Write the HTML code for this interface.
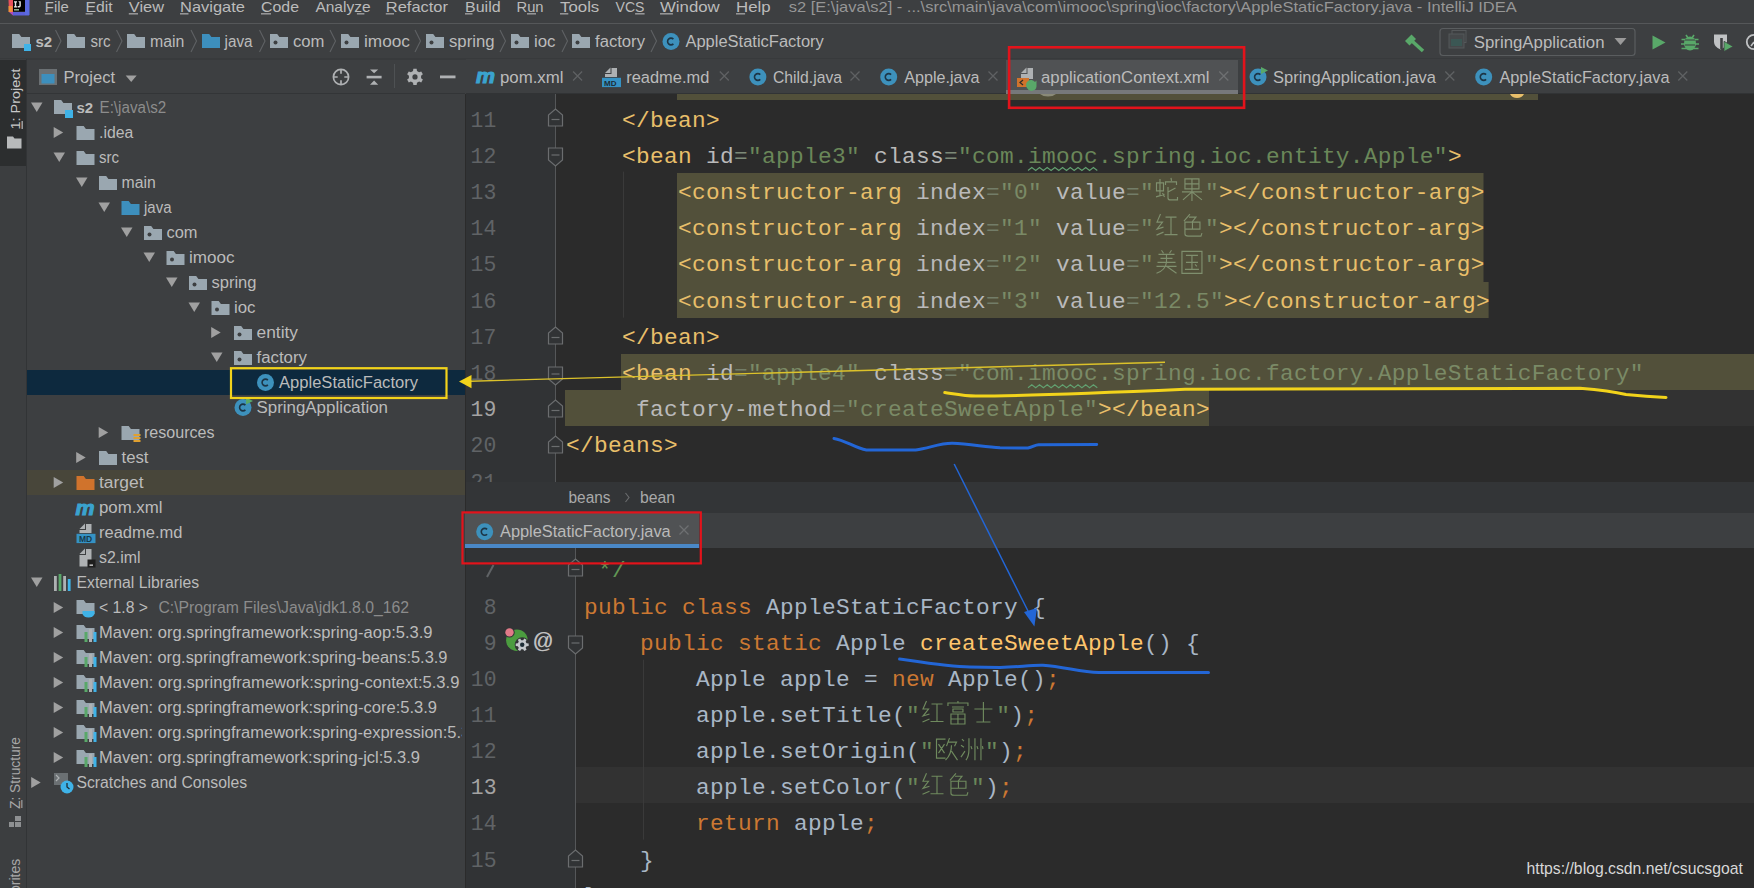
<!DOCTYPE html>
<html><head><meta charset="utf-8"><style>
html,body{margin:0;padding:0;background:#3d3f41;overflow:hidden;width:1754px;height:888px}
svg{display:block}
text{white-space:pre}
</style></head><body>
<svg width="1754" height="888" viewBox="0 0 1754 888">
<rect x="0" y="0" width="1754" height="888" fill="#3d3f41" />
<rect x="0" y="23" width="1754" height="1" fill="#555759" />
<rect x="0" y="58.5" width="1754" height="1" fill="#343638" />
<path d="M8.5 0h4.5v12h-4z" fill="#e8505b"/><path d="M8.5 6h4v6h-4z" fill="#f0903a"/>
<path d="M9 12h8l-4 3.5z" fill="#b04ab8"/><path d="M13 12h16v3.5h-16z" fill="#5b5fd8"/><path d="M25 0h4.5v15h-4.5z" fill="#5a6ae0"/>
<rect x="13" y="0" width="12" height="11.5" fill="#000" />
<path d="M14 1.2h3v1.2h-0.8v3.8h0.8v1.2h-3v-1.2h0.8v-3.8h-0.8zM18.2 1.2h2.6v4.6q0 1.6 -1.6 1.6h-1.6v-1.3h1.2q0.6 0 0.6 -0.6v-3z" fill="#e8e8e8"/>
<rect x="14" y="9" width="5" height="1.6" fill="#8fb08f" />
<text x="44.8" y="12" font-family="'Liberation Sans'" font-size="15" fill="#bbbbbb" textLength="24.0" lengthAdjust="spacingAndGlyphs" >File</text>
<rect x="44.8" y="13.3" width="7.5" height="1.1" fill="#bbbbbb" />
<text x="85.6" y="12" font-family="'Liberation Sans'" font-size="15" fill="#bbbbbb" textLength="27.1" lengthAdjust="spacingAndGlyphs" >Edit</text>
<rect x="85.6" y="13.3" width="7.1" height="1.1" fill="#bbbbbb" />
<text x="128.8" y="12" font-family="'Liberation Sans'" font-size="15" fill="#bbbbbb" textLength="35.2" lengthAdjust="spacingAndGlyphs" >View</text>
<rect x="128.8" y="13.3" width="9.2" height="1.1" fill="#bbbbbb" />
<text x="180" y="12" font-family="'Liberation Sans'" font-size="15" fill="#bbbbbb" textLength="65" lengthAdjust="spacingAndGlyphs" >Navigate</text>
<rect x="180.0" y="13.3" width="8.5" height="1.1" fill="#bbbbbb" />
<text x="261" y="12" font-family="'Liberation Sans'" font-size="15" fill="#bbbbbb" textLength="38" lengthAdjust="spacingAndGlyphs" >Code</text>
<rect x="261.0" y="13.3" width="10.0" height="1.1" fill="#bbbbbb" />
<text x="315.4" y="12" font-family="'Liberation Sans'" font-size="15" fill="#bbbbbb" textLength="55.2" lengthAdjust="spacingAndGlyphs" >Analyze</text>
<rect x="356.9" y="13.3" width="7.5" height="1.1" fill="#bbbbbb" />
<text x="385.8" y="12" font-family="'Liberation Sans'" font-size="15" fill="#bbbbbb" textLength="62.2" lengthAdjust="spacingAndGlyphs" >Refactor</text>
<rect x="385.8" y="13.3" width="8.2" height="1.1" fill="#bbbbbb" />
<text x="465" y="12" font-family="'Liberation Sans'" font-size="15" fill="#bbbbbb" textLength="35.6" lengthAdjust="spacingAndGlyphs" >Build</text>
<rect x="465.0" y="13.3" width="7.5" height="1.1" fill="#bbbbbb" />
<text x="516.5" y="12" font-family="'Liberation Sans'" font-size="15" fill="#bbbbbb" textLength="27.1" lengthAdjust="spacingAndGlyphs" >Run</text>
<rect x="527.0" y="13.3" width="9" height="1.1" fill="#bbbbbb" />
<text x="560" y="12" font-family="'Liberation Sans'" font-size="15" fill="#bbbbbb" textLength="39.3" lengthAdjust="spacingAndGlyphs" >Tools</text>
<rect x="560.0" y="13.3" width="8.3" height="1.1" fill="#bbbbbb" />
<text x="615.6" y="12" font-family="'Liberation Sans'" font-size="15" fill="#bbbbbb" textLength="28.9" lengthAdjust="spacingAndGlyphs" >VCS</text>
<rect x="635.1" y="13.3" width="9.5" height="1.1" fill="#bbbbbb" />
<text x="660" y="12" font-family="'Liberation Sans'" font-size="15" fill="#bbbbbb" textLength="59.7" lengthAdjust="spacingAndGlyphs" >Window</text>
<rect x="660.0" y="13.3" width="12.9" height="1.1" fill="#bbbbbb" />
<text x="736" y="12" font-family="'Liberation Sans'" font-size="15" fill="#bbbbbb" textLength="34.6" lengthAdjust="spacingAndGlyphs" >Help</text>
<rect x="736.0" y="13.3" width="9.1" height="1.1" fill="#bbbbbb" />
<text x="788.7" y="12" font-family="'Liberation Sans'" font-size="15" fill="#969696" textLength="728" lengthAdjust="spacingAndGlyphs" >s2 [E:\java\s2] - ...\src\main\java\com\imooc\spring\ioc\factory\AppleStaticFactory.java - IntelliJ IDEA</text>
<path d="M12 34h7.2l2.2 3.1H30V48H12Z" fill="#9aa7b0"/>
<rect x="24" y="44" width="7" height="7" fill="#3fb3e8" />
<text x="35.4" y="47" font-family="'Liberation Sans'" font-size="15" fill="#bbbbbb" font-weight="bold" >s2</text>
<path d="M55.5 30l5.5 11l-5.5 11" fill="none" stroke="#5f6264" stroke-width="1.1"/>
<path d="M67 34h7.2l2.2 3.1H85V48H67Z" fill="#9aa7b0"/>
<text x="90.5" y="47" font-family="'Liberation Sans'" font-size="16" fill="#bbbbbb" textLength="20.1" lengthAdjust="spacingAndGlyphs" >src</text>
<path d="M116.5 30l5.5 11l-5.5 11" fill="none" stroke="#5f6264" stroke-width="1.1"/>
<path d="M127 34h7.2l2.2 3.1H145V48H127Z" fill="#9aa7b0"/>
<text x="150" y="47" font-family="'Liberation Sans'" font-size="16" fill="#bbbbbb" textLength="34.4" lengthAdjust="spacingAndGlyphs" >main</text>
<path d="M191 30l5.5 11l-5.5 11" fill="none" stroke="#5f6264" stroke-width="1.1"/>
<path d="M202 34h7.2l2.2 3.1H220V48H202Z" fill="#3d8fbd"/>
<text x="224.6" y="47" font-family="'Liberation Sans'" font-size="16" fill="#bbbbbb" textLength="28" lengthAdjust="spacingAndGlyphs" >java</text>
<path d="M259.5 30l5.5 11l-5.5 11" fill="none" stroke="#5f6264" stroke-width="1.1"/>
<path d="M270 34h7.2l2.2 3.1H288V48H270Z" fill="#9aa7b0"/>
<circle cx="275.5" cy="42.5" r="2" fill="#3d3f41"/>
<text x="293" y="47" font-family="'Liberation Sans'" font-size="16" fill="#bbbbbb" textLength="31.5" lengthAdjust="spacingAndGlyphs" >com</text>
<path d="M330 30l5.5 11l-5.5 11" fill="none" stroke="#5f6264" stroke-width="1.1"/>
<path d="M341 34h7.2l2.2 3.1H359V48H341Z" fill="#9aa7b0"/>
<circle cx="346.5" cy="42.5" r="2" fill="#3d3f41"/>
<text x="364" y="47" font-family="'Liberation Sans'" font-size="16" fill="#bbbbbb" textLength="46" lengthAdjust="spacingAndGlyphs" >imooc</text>
<path d="M415 30l5.5 11l-5.5 11" fill="none" stroke="#5f6264" stroke-width="1.1"/>
<path d="M426 34h7.2l2.2 3.1H444V48H426Z" fill="#9aa7b0"/>
<circle cx="431.5" cy="42.5" r="2" fill="#3d3f41"/>
<text x="449" y="47" font-family="'Liberation Sans'" font-size="16" fill="#bbbbbb" textLength="45.5" lengthAdjust="spacingAndGlyphs" >spring</text>
<path d="M500 30l5.5 11l-5.5 11" fill="none" stroke="#5f6264" stroke-width="1.1"/>
<path d="M511 34h7.2l2.2 3.1H529V48H511Z" fill="#9aa7b0"/>
<circle cx="516.5" cy="42.5" r="2" fill="#3d3f41"/>
<text x="534" y="47" font-family="'Liberation Sans'" font-size="16" fill="#bbbbbb" textLength="21.5" lengthAdjust="spacingAndGlyphs" >ioc</text>
<path d="M562 30l5.5 11l-5.5 11" fill="none" stroke="#5f6264" stroke-width="1.1"/>
<path d="M572 34h7.2l2.2 3.1H590V48H572Z" fill="#9aa7b0"/>
<circle cx="577.5" cy="42.5" r="2" fill="#3d3f41"/>
<text x="595" y="47" font-family="'Liberation Sans'" font-size="16" fill="#bbbbbb" textLength="50" lengthAdjust="spacingAndGlyphs" >factory</text>
<path d="M651 30l5.5 11l-5.5 11" fill="none" stroke="#5f6264" stroke-width="1.1"/>
<circle cx="671" cy="41.5" r="8.5" fill="#3d91bc"/>
<path d="M673.4 39.1A3.4 3.4 0 1 0 673.4 43.9" fill="none" stroke="#1c3546" stroke-width="1.6"/>
<text x="685.4" y="47" font-family="'Liberation Sans'" font-size="16" fill="#bbbbbb" textLength="138.4" lengthAdjust="spacingAndGlyphs" >AppleStaticFactory</text>
<path d="M1405 41l6.5-6.5 4.5 4.5-6.5 6.5z" fill="#59a869"/><path d="M1412 41l11 10" stroke="#59a869" stroke-width="3.5" fill="none"/>
<rect x="1440" y="28.5" width="195" height="27" rx="3" fill="none" stroke="#5a5d5f" stroke-width="1.2"/>
<rect x="1452" y="30.5" width="14" height="12" fill="none" stroke="#55585a" stroke-width="1"/>
<rect x="1449" y="34" width="15" height="14" fill="#45484a" stroke="#55585a" stroke-width="1"/>
<rect x="1451" y="39" width="11" height="7" fill="#3b5754" />
<text x="1473.8" y="47.5" font-family="'Liberation Sans'" font-size="16" fill="#bbbbbb" textLength="130.7" lengthAdjust="spacingAndGlyphs" >SpringApplication</text>
<path d="M1614.5 38h12l-6 7z" fill="#9a9a9a"/>
<path d="M1652.5 35.5v14l13 -7z" fill="#59a869"/>
<ellipse cx="1690" cy="43.5" rx="6" ry="7" fill="#59a869"/><path d="M1681.5 39.5h17M1681 44h18M1681.5 48.5h17" stroke="#59a869" stroke-width="1.6"/><path d="M1686 35l2 3M1694 35l-2 3" stroke="#59a869" stroke-width="1.6"/><path d="M1685 40h10M1685 45h10" stroke="#3d3f41" stroke-width="1.2"/>
<path d="M1714 34.5H1727V42Q1727 47 1720.5 49.5Q1714 47 1714 42Z" fill="#c0c2c4"/><path d="M1721.5 38v11" stroke="#3d3f41" stroke-width="2.6"/><path d="M1724 41.3v10.3l9.2 -5.15z" fill="#59a869" stroke="#3d3f41" stroke-width="0.8"/>
<circle cx="1754" cy="42" r="7.2" fill="none" stroke="#c0c2c4" stroke-width="1.8"/><path d="M1754 42l-3 4" stroke="#c0c2c4" stroke-width="1.6"/>
<rect x="0" y="59" width="26" height="829" fill="#3c3e40" />
<rect x="0" y="60" width="26" height="106" fill="#2c2e2f" />
<rect x="26" y="59" width="1" height="829" fill="#323436" />
<text transform="translate(20.2 129.5) rotate(-90)" font-family="'Liberation Sans'" font-size="13.5" fill="#c8c8c8" textLength="61" lengthAdjust="spacingAndGlyphs">1: Project</text>
<rect x="21.6" y="121" width="1.1" height="8" fill="#c8c8c8" />
<path d="M7 136.5h6l1.5 2h7v10h-14.5z" fill="#b8babb"/>
<text transform="translate(20 809) rotate(-90)" font-family="'Liberation Sans'" font-size="14" fill="#a8a8a8" textLength="72" lengthAdjust="spacingAndGlyphs">Z: Structure</text>
<path d="M9 822h5v5h-5zM15 822h6v5h-6zM15 816h6v5h-6z" fill="#8e9092"/>
<rect x="21.3" y="800" width="1.1" height="8" fill="#a8a8a8" />
<text transform="translate(20 893) rotate(-90)" font-family="'Liberation Sans'" font-size="14" fill="#a8a8a8">orites</text>
<rect x="27" y="93" width="438" height="1" fill="#333537" />
<rect x="39" y="69" width="18" height="16" fill="#6b7073" />
<rect x="41.5" y="74" width="13" height="9.5" fill="#3d8fbd" />
<text x="63.5" y="82.7" font-family="'Liberation Sans'" font-size="16" fill="#bbbbbb" textLength="51.5" lengthAdjust="spacingAndGlyphs" >Project</text>
<path d="M125.7 75.5h11l-5.5 6.5z" fill="#a0a0a0"/>
<circle cx="341" cy="77" r="7.6" fill="none" stroke="#afb1b3" stroke-width="1.7"/><path d="M341 69.5v4.2M341 80.3v4.2M333.5 77h4.2M344.3 77h4.2" stroke="#afb1b3" stroke-width="1.7"/>
<path d="M366.6 77.1h15" stroke="#afb1b3" stroke-width="2.6"/><path d="M370 69.4h8.2l-4.1 3.9z M370 84.8h8.2l-4.1 -4.3z" fill="#afb1b3"/>
<rect x="394" y="64" width="1" height="24" fill="#4e5153" />
<path d="M413.35 68.77L416.65 68.77L416.97 71.02L419.10 72.25L421.22 71.40L422.87 74.26L421.08 75.67L421.08 78.13L422.87 79.54L421.22 82.40L419.10 81.55L416.97 82.78L416.65 85.03L413.35 85.03L413.03 82.78L410.90 81.55L408.78 82.40L407.13 79.54L408.92 78.13L408.92 75.67L407.13 74.26L408.78 71.40L410.90 72.25L413.03 71.02Z" fill="#afb1b3"/><circle cx="415" cy="76.9" r="2.6" fill="#3d3f41"/>
<rect x="440" y="75.5" width="15.5" height="2.8" fill="#afb1b3" />
<rect x="27" y="370" width="438" height="25" fill="#0d293e" />
<rect x="27" y="470" width="438" height="25" fill="#48463a" />
<path d="M31.0 102.5h11.5l-5.75 9.5z" fill="#a0a0a0"/>
<path d="M54.0 100h7.2l2.2 3.1H72.0V114H54.0Z" fill="#9aa7b0"/>
<rect x="65.0" y="110" width="8" height="8" fill="#3fb3e8" />
<text x="76.5" y="112.6" font-family="'Liberation Sans'" font-size="15" fill="#bbbbbb" font-weight="bold" >s2</text>
<text x="99.5" y="112.6" font-family="'Liberation Sans'" font-size="16" fill="#8c8c8c" textLength="66.7" lengthAdjust="spacingAndGlyphs" >E:\java\s2</text>
<path d="M53.7 127v11l9.5 -5.5z" fill="#a0a0a0"/>
<path d="M76.5 126h7.2l2.2 3.1H94.5V140H76.5Z" fill="#9aa7b0"/>
<text x="99.0" y="137.6" font-family="'Liberation Sans'" font-size="16" fill="#bbbbbb" textLength="34.2" lengthAdjust="spacingAndGlyphs" >.idea</text>
<path d="M53.5 152.5h11.5l-5.75 9.5z" fill="#a0a0a0"/>
<path d="M76.5 151h7.2l2.2 3.1H94.5V165H76.5Z" fill="#9aa7b0"/>
<text x="99.0" y="162.6" font-family="'Liberation Sans'" font-size="16" fill="#bbbbbb" textLength="20" lengthAdjust="spacingAndGlyphs" >src</text>
<path d="M76.0 177.5h11.5l-5.75 9.5z" fill="#a0a0a0"/>
<path d="M99.0 176h7.2l2.2 3.1H117.0V190H99.0Z" fill="#9aa7b0"/>
<text x="121.5" y="187.6" font-family="'Liberation Sans'" font-size="16" fill="#bbbbbb" textLength="34.2" lengthAdjust="spacingAndGlyphs" >main</text>
<path d="M98.5 202.5h11.5l-5.75 9.5z" fill="#a0a0a0"/>
<path d="M121.5 201h7.2l2.2 3.1H139.5V215H121.5Z" fill="#3d8fbd"/>
<text x="144.0" y="212.6" font-family="'Liberation Sans'" font-size="16" fill="#bbbbbb" textLength="27.5" lengthAdjust="spacingAndGlyphs" >java</text>
<path d="M121.0 227.5h11.5l-5.75 9.5z" fill="#a0a0a0"/>
<path d="M144.0 226h7.2l2.2 3.1H162.0V240H144.0Z" fill="#9aa7b0"/>
<circle cx="149.5" cy="234.5" r="2" fill="#3d3f41"/>
<text x="166.5" y="237.6" font-family="'Liberation Sans'" font-size="16" fill="#bbbbbb" textLength="31" lengthAdjust="spacingAndGlyphs" >com</text>
<path d="M143.5 252.5h11.5l-5.75 9.5z" fill="#a0a0a0"/>
<path d="M166.5 251h7.2l2.2 3.1H184.5V265H166.5Z" fill="#9aa7b0"/>
<circle cx="172.0" cy="259.5" r="2" fill="#3d3f41"/>
<text x="189.0" y="262.6" font-family="'Liberation Sans'" font-size="16" fill="#bbbbbb" textLength="45.5" lengthAdjust="spacingAndGlyphs" >imooc</text>
<path d="M166.0 277.5h11.5l-5.75 9.5z" fill="#a0a0a0"/>
<path d="M189.0 276h7.2l2.2 3.1H207.0V290H189.0Z" fill="#9aa7b0"/>
<circle cx="194.5" cy="284.5" r="2" fill="#3d3f41"/>
<text x="211.5" y="287.6" font-family="'Liberation Sans'" font-size="16" fill="#bbbbbb" textLength="45" lengthAdjust="spacingAndGlyphs" >spring</text>
<path d="M188.5 302.5h11.5l-5.75 9.5z" fill="#a0a0a0"/>
<path d="M211.5 301h7.2l2.2 3.1H229.5V315H211.5Z" fill="#9aa7b0"/>
<circle cx="217.0" cy="309.5" r="2" fill="#3d3f41"/>
<text x="234.0" y="312.6" font-family="'Liberation Sans'" font-size="16" fill="#bbbbbb" textLength="21.5" lengthAdjust="spacingAndGlyphs" >ioc</text>
<path d="M211.2 327v11l9.5 -5.5z" fill="#a0a0a0"/>
<path d="M234.0 326h7.2l2.2 3.1H252.0V340H234.0Z" fill="#9aa7b0"/>
<circle cx="239.5" cy="334.5" r="2" fill="#3d3f41"/>
<text x="256.5" y="337.6" font-family="'Liberation Sans'" font-size="16" fill="#bbbbbb" textLength="41.5" lengthAdjust="spacingAndGlyphs" >entity</text>
<path d="M211.0 352.5h11.5l-5.75 9.5z" fill="#a0a0a0"/>
<path d="M234.0 351h7.2l2.2 3.1H252.0V365H234.0Z" fill="#9aa7b0"/>
<circle cx="239.5" cy="359.5" r="2" fill="#3d3f41"/>
<text x="256.5" y="362.6" font-family="'Liberation Sans'" font-size="16" fill="#bbbbbb" textLength="50.5" lengthAdjust="spacingAndGlyphs" >factory</text>
<circle cx="265.5" cy="382.5" r="8.5" fill="#3d91bc"/>
<path d="M267.9 380.1A3.4 3.4 0 1 0 267.9 384.9" fill="none" stroke="#1c3546" stroke-width="1.6"/>
<text x="279.0" y="387.6" font-family="'Liberation Sans'" font-size="16" fill="#bbbbbb" textLength="139" lengthAdjust="spacingAndGlyphs" >AppleStaticFactory</text>
<circle cx="243.0" cy="407.5" r="8.5" fill="#3d91bc"/>
<path d="M245.4 405.1A3.4 3.4 0 1 0 245.4 409.9" fill="none" stroke="#1c3546" stroke-width="1.6"/>
<path d="M246.0 397.5l7 3.5l-7 3.5z" fill="#59a869"/>
<text x="256.5" y="412.6" font-family="'Liberation Sans'" font-size="16" fill="#bbbbbb" textLength="131.5" lengthAdjust="spacingAndGlyphs" >SpringApplication</text>
<path d="M98.7 427v11l9.5 -5.5z" fill="#a0a0a0"/>
<path d="M121.5 426h7.2l2.2 3.1H139.5V440H121.5Z" fill="#9aa7b0"/>
<path d="M133.5 435h7M133.5 438h7M133.5 441h7" stroke="#e0a030" stroke-width="1.8"/>
<text x="144.0" y="437.6" font-family="'Liberation Sans'" font-size="16" fill="#bbbbbb" textLength="70.5" lengthAdjust="spacingAndGlyphs" >resources</text>
<path d="M76.2 452v11l9.5 -5.5z" fill="#a0a0a0"/>
<path d="M99.0 451h7.2l2.2 3.1H117.0V465H99.0Z" fill="#9aa7b0"/>
<text x="121.5" y="462.6" font-family="'Liberation Sans'" font-size="16" fill="#bbbbbb" textLength="27" lengthAdjust="spacingAndGlyphs" >test</text>
<path d="M53.7 477v11l9.5 -5.5z" fill="#a0a0a0"/>
<path d="M76.5 476h7.2l2.2 3.1H94.5V490H76.5Z" fill="#d0732c"/>
<text x="99.0" y="487.6" font-family="'Liberation Sans'" font-size="16" fill="#bbbbbb" textLength="44.5" lengthAdjust="spacingAndGlyphs" >target</text>
<text x="75.5" y="514.5" font-family="'Liberation Sans'" font-size="21" font-style="italic" font-weight="bold" fill="#3aa3cf" stroke="#3aa3cf" stroke-width="1.1" textLength="19" lengthAdjust="spacingAndGlyphs">m</text>
<text x="99.0" y="512.6" font-family="'Liberation Sans'" font-size="16" fill="#bbbbbb" textLength="63.5" lengthAdjust="spacingAndGlyphs" >pom.xml</text>
<path d="M86.0 524H91.5V533H79.5V530H86.0Z" fill="#aeb1b3"/><path d="M79.5 529L85.0 523.5V529Z" fill="#aeb1b3"/>
<rect x="76.5" y="533.8" width="19" height="9.3" fill="#3592c4" />
<text x="79.0" y="542" font-family="'Liberation Sans'" font-size="8.5" fill="#173a4c" font-weight="bold">MD</text>
<text x="99.0" y="537.6" font-family="'Liberation Sans'" font-size="16" fill="#bbbbbb" textLength="83.5" lengthAdjust="spacingAndGlyphs" >readme.md</text>
<path d="M86.0 549H91.5V566.5H79.5V555H86.0Z" fill="#aeb1b3"/><path d="M79.5 554L85.0 548.5V554Z" fill="#aeb1b3"/>
<rect x="87.5" y="559.5" width="8" height="8" fill="#1e1e1e" />
<rect x="89.5" y="564.5" width="3.5" height="1.3" fill="#ddd" />
<text x="99.0" y="562.6" font-family="'Liberation Sans'" font-size="16" fill="#bbbbbb" textLength="41.5" lengthAdjust="spacingAndGlyphs" >s2.iml</text>
<path d="M31.0 577.5h11.5l-5.75 9.5z" fill="#a0a0a0"/>
<rect x="54.0" y="576" width="2.8" height="15" fill="#aeb1b3" />
<rect x="58.6" y="574" width="2.8" height="17" fill="#59a869" />
<rect x="63.2" y="576" width="2.8" height="15" fill="#aeb1b3" />
<rect x="67.8" y="579" width="2.8" height="12" fill="#3fb3e8" />
<text x="76.5" y="587.6" font-family="'Liberation Sans'" font-size="16" fill="#bbbbbb" textLength="122.6" lengthAdjust="spacingAndGlyphs" >External Libraries</text>
<path d="M53.7 602v11l9.5 -5.5z" fill="#a0a0a0"/>
<path d="M76.5 600h7.2l2.2 3.1H94.5V614H76.5Z" fill="#9aa7b0"/>
<path d="M82.5 611h12v2.5a6 4 0 0 1 -12 0z" fill="#3fb3e8"/>
<text x="99.0" y="612.6" font-family="'Liberation Sans'" font-size="16" fill="#bbbbbb" textLength="49" lengthAdjust="spacingAndGlyphs" >&lt; 1.8 &gt;</text>
<text x="158.4" y="612.6" font-family="'Liberation Sans'" font-size="16" fill="#8c8c8c" textLength="250.6" lengthAdjust="spacingAndGlyphs" >C:\Program Files\Java\jdk1.8.0_162</text>
<path d="M53.7 627v11l9.5 -5.5z" fill="#a0a0a0"/>
<path d="M76.5 625h7.2l2.2 3.1H94.5V639H76.5Z" fill="#9aa7b0"/>
<rect x="84.5" y="632" width="3" height="10" fill="#59a869" />
<rect x="89.0" y="629" width="3" height="13" fill="#aeb1b3" />
<rect x="93.5" y="632" width="3" height="10" fill="#3fb3e8" />
<text x="99.0" y="637.6" font-family="'Liberation Sans'" font-size="16" fill="#bbbbbb" textLength="333.5" lengthAdjust="spacingAndGlyphs" >Maven: org.springframework:spring-aop:5.3.9</text>
<path d="M53.7 652v11l9.5 -5.5z" fill="#a0a0a0"/>
<path d="M76.5 650h7.2l2.2 3.1H94.5V664H76.5Z" fill="#9aa7b0"/>
<rect x="84.5" y="657" width="3" height="10" fill="#59a869" />
<rect x="89.0" y="654" width="3" height="13" fill="#aeb1b3" />
<rect x="93.5" y="657" width="3" height="10" fill="#3fb3e8" />
<text x="99.0" y="662.6" font-family="'Liberation Sans'" font-size="16" fill="#bbbbbb" textLength="348.5" lengthAdjust="spacingAndGlyphs" >Maven: org.springframework:spring-beans:5.3.9</text>
<path d="M53.7 677v11l9.5 -5.5z" fill="#a0a0a0"/>
<path d="M76.5 675h7.2l2.2 3.1H94.5V689H76.5Z" fill="#9aa7b0"/>
<rect x="84.5" y="682" width="3" height="10" fill="#59a869" />
<rect x="89.0" y="679" width="3" height="13" fill="#aeb1b3" />
<rect x="93.5" y="682" width="3" height="10" fill="#3fb3e8" />
<text x="99.0" y="687.6" font-family="'Liberation Sans'" font-size="16" fill="#bbbbbb" textLength="360.4" lengthAdjust="spacingAndGlyphs" >Maven: org.springframework:spring-context:5.3.9</text>
<path d="M53.7 702v11l9.5 -5.5z" fill="#a0a0a0"/>
<path d="M76.5 700h7.2l2.2 3.1H94.5V714H76.5Z" fill="#9aa7b0"/>
<rect x="84.5" y="707" width="3" height="10" fill="#59a869" />
<rect x="89.0" y="704" width="3" height="13" fill="#aeb1b3" />
<rect x="93.5" y="707" width="3" height="10" fill="#3fb3e8" />
<text x="99.0" y="712.6" font-family="'Liberation Sans'" font-size="16" fill="#bbbbbb" textLength="338" lengthAdjust="spacingAndGlyphs" >Maven: org.springframework:spring-core:5.3.9</text>
<path d="M53.7 727v11l9.5 -5.5z" fill="#a0a0a0"/>
<path d="M76.5 725h7.2l2.2 3.1H94.5V739H76.5Z" fill="#9aa7b0"/>
<rect x="84.5" y="732" width="3" height="10" fill="#59a869" />
<rect x="89.0" y="729" width="3" height="13" fill="#aeb1b3" />
<rect x="93.5" y="732" width="3" height="10" fill="#3fb3e8" />
<text x="99.0" y="737.6" font-family="'Liberation Sans'" font-size="16" fill="#bbbbbb" textLength="385" lengthAdjust="spacingAndGlyphs"  clip-path="url(#treeclip)">Maven: org.springframework:spring-expression:5.3.9</text>
<path d="M53.7 752v11l9.5 -5.5z" fill="#a0a0a0"/>
<path d="M76.5 750h7.2l2.2 3.1H94.5V764H76.5Z" fill="#9aa7b0"/>
<rect x="84.5" y="757" width="3" height="10" fill="#59a869" />
<rect x="89.0" y="754" width="3" height="13" fill="#aeb1b3" />
<rect x="93.5" y="757" width="3" height="10" fill="#3fb3e8" />
<text x="99.0" y="762.6" font-family="'Liberation Sans'" font-size="16" fill="#bbbbbb" textLength="321" lengthAdjust="spacingAndGlyphs" >Maven: org.springframework:spring-jcl:5.3.9</text>
<path d="M31.2 777v11l9.5 -5.5z" fill="#a0a0a0"/>
<path d="M54.0 773h14v12h-14z" fill="#6b7073"/><path d="M56.0 775l3 3l-3 3" stroke="#aeb1b3" fill="none" stroke-width="1.2"/>
<circle cx="67.0" cy="787" r="6.5" fill="#3fb3e8"/><path d="M67.0 783v4l2.5 2" stroke="#1d2d36" fill="none" stroke-width="1.3"/>
<text x="76.5" y="787.6" font-family="'Liberation Sans'" font-size="16" fill="#bbbbbb" textLength="170.5" lengthAdjust="spacingAndGlyphs" >Scratches and Consoles</text>
<clipPath id="treeclip"><rect x="27" y="0" width="435" height="888"/></clipPath>
<rect x="465" y="94" width="1" height="794" fill="#2b2b2b" />
<rect x="466" y="59" width="1288" height="34" fill="#3d3f41" />
<rect x="466" y="93" width="1288" height="1" fill="#313335" />
<rect x="1006" y="60" width="232" height="34" fill="#505254" />
<rect x="1006" y="90" width="232" height="4" fill="#76787a" />
<text x="476" y="83.4" font-family="'Liberation Sans'" font-size="21" font-style="italic" font-weight="bold" fill="#3aa3cf" stroke="#3aa3cf" stroke-width="1.1" textLength="19" lengthAdjust="spacingAndGlyphs">m</text>
<text x="500" y="83.4" font-family="'Liberation Sans'" font-size="16.3" fill="#bbbbbb" textLength="63.5" lengthAdjust="spacingAndGlyphs" >pom.xml</text>
<path d="M573.1 71.5L582.1 80.5M582.1 71.5L573.1 80.5" stroke="#5f6163" stroke-width="1.3"/>
<path d="M611.5 68H617V77H605V74H611.5Z" fill="#aeb1b3"/><path d="M605 73L610.5 67.5V73Z" fill="#aeb1b3"/>
<rect x="602" y="77.8" width="19" height="9.3" fill="#3592c4" />
<text x="604" y="86" font-family="'Liberation Sans'" font-size="8" fill="#1d2d36" font-weight="bold">MD</text>
<text x="626.2" y="83.4" font-family="'Liberation Sans'" font-size="16.3" fill="#bbbbbb" textLength="83.1" lengthAdjust="spacingAndGlyphs" >readme.md</text>
<path d="M719.8 71.5L728.8 80.5M728.8 71.5L719.8 80.5" stroke="#5f6163" stroke-width="1.3"/>
<circle cx="757.9" cy="77" r="8.5" fill="#3d91bc"/>
<path d="M760.3 74.6A3.4 3.4 0 1 0 760.3 79.4" fill="none" stroke="#1c3546" stroke-width="1.6"/>
<text x="773" y="83.4" font-family="'Liberation Sans'" font-size="16.3" fill="#bbbbbb" textLength="69" lengthAdjust="spacingAndGlyphs" >Child.java</text>
<path d="M850.5 71.5L859.5 80.5M859.5 71.5L850.5 80.5" stroke="#5f6163" stroke-width="1.3"/>
<circle cx="888.7" cy="77" r="8.5" fill="#3d91bc"/>
<path d="M891.1 74.6A3.4 3.4 0 1 0 891.1 79.4" fill="none" stroke="#1c3546" stroke-width="1.6"/>
<text x="904.3" y="83.4" font-family="'Liberation Sans'" font-size="16.3" fill="#bbbbbb" textLength="75.3" lengthAdjust="spacingAndGlyphs" >Apple.java</text>
<path d="M988.5 71.5L997.5 80.5M997.5 71.5L988.5 80.5" stroke="#5f6163" stroke-width="1.3"/>
<path d="M1027.5 68H1033V79H1021V74H1027.5Z" fill="#aeb1b3"/><path d="M1021 73L1026.5 67.5V73Z" fill="#aeb1b3"/>
<rect x="1017" y="78" width="12" height="9" fill="#d0732c" />
<path d="M1023 80l-3 2.5l3 2.5" stroke="#2b2b2b" fill="none" stroke-width="1.2"/>
<path d="M1027 88a5 5 0 0 1 8 -6l1.5 -1.5v6a5 5 0 0 1 -9.5 1.5z" fill="#59a869"/>
<text x="1041" y="83.4" font-family="'Liberation Sans'" font-size="16.3" fill="#bbbbbb" textLength="168.5" lengthAdjust="spacingAndGlyphs" >applicationContext.xml</text>
<path d="M1219.3 71.5L1228.3 80.5M1228.3 71.5L1219.3 80.5" stroke="#6e7072" stroke-width="1.3"/>
<circle cx="1258" cy="77" r="8.5" fill="#3d91bc"/>
<path d="M1260.4 74.6A3.4 3.4 0 1 0 1260.4 79.4" fill="none" stroke="#1c3546" stroke-width="1.6"/>
<path d="M1261 67l7 3.5l-7 3.5z" fill="#59a869"/>
<text x="1273" y="83.4" font-family="'Liberation Sans'" font-size="16.3" fill="#bbbbbb" textLength="163" lengthAdjust="spacingAndGlyphs" >SpringApplication.java</text>
<path d="M1445.3 71.5L1454.3 80.5M1454.3 71.5L1445.3 80.5" stroke="#5f6163" stroke-width="1.3"/>
<circle cx="1483.7" cy="77" r="8.5" fill="#3d91bc"/>
<path d="M1486.1000000000001 74.6A3.4 3.4 0 1 0 1486.1000000000001 79.4" fill="none" stroke="#1c3546" stroke-width="1.6"/>
<text x="1499.4" y="83.4" font-family="'Liberation Sans'" font-size="16.3" fill="#bbbbbb" textLength="170.1" lengthAdjust="spacingAndGlyphs" >AppleStaticFactory.java</text>
<path d="M1678.3 71.5L1687.3 80.5M1687.3 71.5L1678.3 80.5" stroke="#5f6163" stroke-width="1.3"/>
<rect x="466" y="94" width="1288" height="388" fill="#2b2b2b" />
<rect x="466" y="94" width="90" height="388" fill="#313335" />
<rect x="677" y="94" width="861" height="6" fill="#52503a" />
<rect x="677" y="173" width="806.5" height="145" fill="#52503a" />
<rect x="1483" y="282" width="5.6" height="36" fill="#52503a" />
<rect x="621" y="354" width="1133" height="36" fill="#52503a" />
<rect x="1209" y="390" width="545" height="36" fill="#323232" />
<rect x="565" y="390" width="644" height="36" fill="#52503a" />
<rect x="623" y="171.6" width="1" height="146" fill="#3a3a3a" />
<rect x="555" y="94" width="1" height="388" fill="#555759" />
<path d="M548.5 126V115L555.5 109L562.5 115V126Z" fill="#313335" stroke="#6b6d6f" stroke-width="1.2"/><path d="M551.5 119.5h8" stroke="#6b6d6f" stroke-width="1.2"/>
<path d="M548.5 148V160L555.5 166L562.5 160V148Z" fill="#313335" stroke="#6b6d6f" stroke-width="1.2"/><path d="M551.5 155h8" stroke="#6b6d6f" stroke-width="1.2"/>
<path d="M548.5 344V333L555.5 327L562.5 333V344Z" fill="#313335" stroke="#6b6d6f" stroke-width="1.2"/><path d="M551.5 337.5h8" stroke="#6b6d6f" stroke-width="1.2"/>
<path d="M548.5 367V379L555.5 385L562.5 379V367Z" fill="#313335" stroke="#6b6d6f" stroke-width="1.2"/><path d="M551.5 374h8" stroke="#6b6d6f" stroke-width="1.2"/>
<path d="M548.5 417V406L555.5 400L562.5 406V417Z" fill="#313335" stroke="#6b6d6f" stroke-width="1.2"/><path d="M551.5 410.5h8" stroke="#6b6d6f" stroke-width="1.2"/>
<path d="M548.5 453V442L555.5 436L562.5 442V453Z" fill="#313335" stroke="#6b6d6f" stroke-width="1.2"/><path d="M551.5 446.5h8" stroke="#6b6d6f" stroke-width="1.2"/>
<text x="496.3" y="126.5" font-family="'Liberation Mono'" font-size="21.4" fill="#606366" text-anchor="end">11</text>
<text x="496.3" y="162.7" font-family="'Liberation Mono'" font-size="21.4" fill="#606366" text-anchor="end">12</text>
<text x="496.3" y="198.9" font-family="'Liberation Mono'" font-size="21.4" fill="#606366" text-anchor="end">13</text>
<text x="496.3" y="235.10000000000002" font-family="'Liberation Mono'" font-size="21.4" fill="#606366" text-anchor="end">14</text>
<text x="496.3" y="271.3" font-family="'Liberation Mono'" font-size="21.4" fill="#606366" text-anchor="end">15</text>
<text x="496.3" y="307.5" font-family="'Liberation Mono'" font-size="21.4" fill="#606366" text-anchor="end">16</text>
<text x="496.3" y="343.70000000000005" font-family="'Liberation Mono'" font-size="21.4" fill="#606366" text-anchor="end">17</text>
<text x="496.3" y="379.90000000000003" font-family="'Liberation Mono'" font-size="21.4" fill="#606366" text-anchor="end">18</text>
<text x="496.3" y="416.1" font-family="'Liberation Mono'" font-size="21.4" fill="#a4a3a3" text-anchor="end">19</text>
<text x="496.3" y="452.3" font-family="'Liberation Mono'" font-size="21.4" fill="#606366" text-anchor="end">20</text>
<text x="496.3" y="488.5" font-family="'Liberation Mono'" font-size="21.4" fill="#606366" text-anchor="end">21</text>
<text y="126.5" font-family="'Liberation Mono'" font-size="22.8" letter-spacing="0.315"><tspan x="622.00" fill="#e8bf6a">&lt;/bean&gt;</tspan></text>
<text y="162.7" font-family="'Liberation Mono'" font-size="22.8" letter-spacing="0.315"><tspan x="622.00" fill="#e8bf6a">&lt;bean</tspan><tspan x="706.00" fill="#bababa">id</tspan><tspan x="734.00" fill="#7d8a78">=</tspan><tspan x="748.00" fill="#6a8759">"apple3"</tspan><tspan x="874.00" fill="#bababa">class</tspan><tspan x="944.00" fill="#7d8a78">=</tspan><tspan x="958.00" fill="#6a8759">"com.imooc.spring.ioc.entity.Apple"</tspan><tspan x="1448.00" fill="#e8bf6a">&gt;</tspan></text>
<text y="198.9" font-family="'Liberation Mono'" font-size="22.8" letter-spacing="0.315"><tspan x="678.00" fill="#e8bf6a">&lt;constructor-arg</tspan><tspan x="916.00" fill="#bababa">index</tspan><tspan x="986.00" fill="#737d68">=</tspan><tspan x="1000.00" fill="#7a8a66">"0"</tspan><tspan x="1056.00" fill="#bababa">value</tspan><tspan x="1126.00" fill="#737d68">=</tspan><tspan x="1140.00" fill="#7a8a66">"</tspan><tspan x="1204.90" fill="#7a8a66">"</tspan><tspan x="1218.90" fill="#e8bf6a">&gt;&lt;/constructor-arg&gt;</tspan></text>
<path transform="translate(1155.50 177.90)" d="M1 5H8V13H1Z M4.5 1V18 M0.5 19L9 16.5 M7 15L9 19 M15.5 0L16 3 M10 7V4H21V7 M12.5 9V20Q12.5 22 15 22H22V19 M12.5 14L20 10" fill="none" stroke="#7f8f6e" stroke-width="1.15"/>
<path transform="translate(1180.95 177.90)" d="M4 1H18V11H4Z M4 6H18 M11 1V23 M1 14H21 M11 14L2 22 M11 14L21 22" fill="none" stroke="#7f8f6e" stroke-width="1.15"/>
<text y="235.10000000000002" font-family="'Liberation Mono'" font-size="22.8" letter-spacing="0.315"><tspan x="678.00" fill="#e8bf6a">&lt;constructor-arg</tspan><tspan x="916.00" fill="#bababa">index</tspan><tspan x="986.00" fill="#737d68">=</tspan><tspan x="1000.00" fill="#7a8a66">"1"</tspan><tspan x="1056.00" fill="#bababa">value</tspan><tspan x="1126.00" fill="#737d68">=</tspan><tspan x="1140.00" fill="#7a8a66">"</tspan><tspan x="1204.90" fill="#7a8a66">"</tspan><tspan x="1218.90" fill="#e8bf6a">&gt;&lt;/constructor-arg&gt;</tspan></text>
<path transform="translate(1155.50 214.10)" d="M5 0L1.5 8L7 8L1.5 15L8 13 M1 21L8 18 M10 3H21 M15.5 3V20 M9 20.5H22" fill="none" stroke="#7f8f6e" stroke-width="1.15"/>
<path transform="translate(1180.95 214.10)" d="M9 0L3 7 M8 3H15L11 8 M4 8H19V15H4Z M11.5 8V15 M4 15V20Q4 22 7 22H20L21 19" fill="none" stroke="#7f8f6e" stroke-width="1.15"/>
<text y="271.3" font-family="'Liberation Mono'" font-size="22.8" letter-spacing="0.315"><tspan x="678.00" fill="#e8bf6a">&lt;constructor-arg</tspan><tspan x="916.00" fill="#bababa">index</tspan><tspan x="986.00" fill="#737d68">=</tspan><tspan x="1000.00" fill="#7a8a66">"2"</tspan><tspan x="1056.00" fill="#bababa">value</tspan><tspan x="1126.00" fill="#737d68">=</tspan><tspan x="1140.00" fill="#7a8a66">"</tspan><tspan x="1204.90" fill="#7a8a66">"</tspan><tspan x="1218.90" fill="#e8bf6a">&gt;&lt;/constructor-arg&gt;</tspan></text>
<path transform="translate(1155.50 250.30)" d="M6 0L8 3 M16 0L14 3 M3 4H19 M5 8H17 M2 12H20 M11 4V12 M1 16H21 M11 12Q10 20 1 23 M11 16L21 23" fill="none" stroke="#7f8f6e" stroke-width="1.15"/>
<path transform="translate(1180.95 250.30)" d="M1 1H21V23H1Z M5 5H17 M5 12H17 M4 19H18 M11 5V19 M14 14L16 16" fill="none" stroke="#7f8f6e" stroke-width="1.15"/>
<text y="307.5" font-family="'Liberation Mono'" font-size="22.8" letter-spacing="0.315"><tspan x="678.00" fill="#e8bf6a">&lt;constructor-arg</tspan><tspan x="916.00" fill="#bababa">index</tspan><tspan x="986.00" fill="#737d68">=</tspan><tspan x="1000.00" fill="#7a8a66">"3"</tspan><tspan x="1056.00" fill="#bababa">value</tspan><tspan x="1126.00" fill="#737d68">=</tspan><tspan x="1140.00" fill="#7a8a66">"12.5"</tspan><tspan x="1224.00" fill="#e8bf6a">&gt;&lt;/constructor-arg&gt;</tspan></text>
<text y="343.70000000000005" font-family="'Liberation Mono'" font-size="22.8" letter-spacing="0.315"><tspan x="622.00" fill="#e8bf6a">&lt;/bean&gt;</tspan></text>
<text y="379.90000000000003" font-family="'Liberation Mono'" font-size="22.8" letter-spacing="0.315"><tspan x="622.00" fill="#e8bf6a">&lt;bean</tspan><tspan x="706.00" fill="#bababa">id</tspan><tspan x="734.00" fill="#737d68">=</tspan><tspan x="748.00" fill="#7a8a66">"apple4"</tspan><tspan x="874.00" fill="#bababa">class</tspan><tspan x="944.00" fill="#737d68">=</tspan><tspan x="958.00" fill="#7a8a66">"com.imooc.spring.ioc.factory.AppleStaticFactory"</tspan></text>
<text y="416.1" font-family="'Liberation Mono'" font-size="22.8" letter-spacing="0.315"><tspan x="636.00" fill="#bababa">factory-method</tspan><tspan x="832.00" fill="#737d68">=</tspan><tspan x="846.00" fill="#7a8a66">"createSweetApple"</tspan><tspan x="1098.00" fill="#e8bf6a">&gt;&lt;/bean&gt;</tspan></text>
<text y="452.3" font-family="'Liberation Mono'" font-size="22.8" letter-spacing="0.315"><tspan x="566.00" fill="#e8bf6a">&lt;/beans&gt;</tspan></text>
<path d="M1510 94h14q-2 4 -7 4q-5 0 -7 -4z" fill="#e8bf6a"/>
<path d="M1040 94h16q-3 2.5 -8 2.5q-5 0 -8 -2.5z" fill="#8a8a78"/>
<path d="M1028.0 170.5L1031.8 167.5L1035.7 170.5L1039.5 167.5L1043.4 170.5L1047.2 167.5L1051.1 170.5L1054.9 167.5L1058.8 170.5L1062.6 167.5L1066.5 170.5L1070.3 167.5L1074.2 170.5L1078.0 167.5L1081.9 170.5L1085.7 167.5L1089.6 170.5L1093.4 167.5L1097.3 170.5" fill="none" stroke="#62a070" stroke-width="1.1"/>
<path d="M1028.0 387.70000000000005L1031.8 384.70000000000005L1035.7 387.70000000000005L1039.5 384.70000000000005L1043.4 387.70000000000005L1047.2 384.70000000000005L1051.1 387.70000000000005L1054.9 384.70000000000005L1058.8 387.70000000000005L1062.6 384.70000000000005L1066.5 387.70000000000005L1070.3 384.70000000000005L1074.2 387.70000000000005L1078.0 384.70000000000005L1081.9 387.70000000000005L1085.7 384.70000000000005L1089.6 387.70000000000005L1093.4 384.70000000000005L1097.3 387.70000000000005" fill="none" stroke="#62a070" stroke-width="1.1"/>
<rect x="466" y="482" width="1288" height="31" fill="#333537" />
<text x="568.5" y="502.8" font-family="'Liberation Sans'" font-size="16" fill="#a9a9a9" textLength="42" lengthAdjust="spacingAndGlyphs" >beans</text>
<path d="M625.5 493l3.5 4.5l-3.5 4.5" fill="none" stroke="#6b6d6f" stroke-width="1.1"/>
<text x="640" y="502.8" font-family="'Liberation Sans'" font-size="16" fill="#a9a9a9" textLength="35" lengthAdjust="spacingAndGlyphs" >bean</text>
<rect x="466" y="513" width="1288" height="35" fill="#3d3f41" />
<rect x="465" y="513" width="234" height="35" fill="#505254" />
<rect x="465" y="544" width="234" height="4" fill="#4a88c7" />
<circle cx="484.7" cy="531.8" r="8.5" fill="#3d91bc"/>
<path d="M487.09999999999997 529.4A3.4 3.4 0 1 0 487.09999999999997 534.1999999999999" fill="none" stroke="#1c3546" stroke-width="1.6"/>
<text x="500" y="536.6" font-family="'Liberation Sans'" font-size="16.3" fill="#bbbbbb" textLength="170.7" lengthAdjust="spacingAndGlyphs" >AppleStaticFactory.java</text>
<path d="M679.5 525.5L688.5 534.5M688.5 525.5L679.5 534.5" stroke="#6e7072" stroke-width="1.3"/>
<rect x="466" y="548" width="1288" height="340" fill="#2b2b2b" />
<rect x="466" y="548" width="109" height="340" fill="#313335" />
<rect x="575" y="767" width="1179" height="36" fill="#323232" />
<rect x="643" y="659.7" width="1" height="180" fill="#3a3a3a" />
<rect x="575" y="548" width="1" height="340" fill="#555759" />
<path d="M568.5 576V565L575.5 559L582.5 565V576Z" fill="#313335" stroke="#6b6d6f" stroke-width="1.2"/><path d="M571.5 569.5h8" stroke="#6b6d6f" stroke-width="1.2"/>
<path d="M568.5 636V648L575.5 654L582.5 648V636Z" fill="#313335" stroke="#6b6d6f" stroke-width="1.2"/><path d="M571.5 643h8" stroke="#6b6d6f" stroke-width="1.2"/>
<path d="M568.5 867V856L575.5 850L582.5 856V867Z" fill="#313335" stroke="#6b6d6f" stroke-width="1.2"/><path d="M571.5 860.5h8" stroke="#6b6d6f" stroke-width="1.2"/>
<path d="M493.5 565L487 577" stroke="#606366" stroke-width="2"/>
<text x="496.5" y="613.6" font-family="'Liberation Mono'" font-size="21.4" fill="#606366" text-anchor="end">8</text>
<text x="496.5" y="649.74" font-family="'Liberation Mono'" font-size="21.4" fill="#606366" text-anchor="end">9</text>
<text x="496.5" y="685.88" font-family="'Liberation Mono'" font-size="21.4" fill="#606366" text-anchor="end">10</text>
<text x="496.5" y="722.02" font-family="'Liberation Mono'" font-size="21.4" fill="#606366" text-anchor="end">11</text>
<text x="496.5" y="758.1600000000001" font-family="'Liberation Mono'" font-size="21.4" fill="#606366" text-anchor="end">12</text>
<text x="496.5" y="794.3" font-family="'Liberation Mono'" font-size="21.4" fill="#a4a3a3" text-anchor="end">13</text>
<text x="496.5" y="830.44" font-family="'Liberation Mono'" font-size="21.4" fill="#606366" text-anchor="end">14</text>
<text x="496.5" y="866.58" font-family="'Liberation Mono'" font-size="21.4" fill="#606366" text-anchor="end">15</text>
<text y="577.46" font-family="'Liberation Mono'" font-size="22.8" letter-spacing="0.315"><tspan x="598.00" fill="#629755">*/</tspan></text>
<text y="613.6" font-family="'Liberation Mono'" font-size="22.8" letter-spacing="0.315"><tspan x="584.00" fill="#cc7832">public class</tspan><tspan x="766.00" fill="#a9b7c6">AppleStaticFactory {</tspan></text>
<text y="649.74" font-family="'Liberation Mono'" font-size="22.8" letter-spacing="0.315"><tspan x="640.00" fill="#cc7832">public static</tspan><tspan x="836.00" fill="#a9b7c6">Apple </tspan><tspan x="920.00" fill="#ffc66d">createSweetApple</tspan><tspan x="1144.00" fill="#a9b7c6">() {</tspan></text>
<text y="685.88" font-family="'Liberation Mono'" font-size="22.8" letter-spacing="0.315"><tspan x="696.00" fill="#a9b7c6">Apple apple = </tspan><tspan x="892.00" fill="#cc7832">new</tspan><tspan x="948.00" fill="#a9b7c6">Apple()</tspan><tspan x="1046.00" fill="#cc7832">;</tspan></text>
<text y="722.02" font-family="'Liberation Mono'" font-size="22.8" letter-spacing="0.315"><tspan x="696.00" fill="#a9b7c6">apple.setTitle(</tspan><tspan x="906.00" fill="#6a8759">"</tspan><tspan x="996.35" fill="#6a8759">"</tspan><tspan x="1010.35" fill="#a9b7c6">)</tspan><tspan x="1024.35" fill="#cc7832">;</tspan></text>
<path transform="translate(921.50 701.02)" d="M5 0L1.5 8L7 8L1.5 15L8 13 M1 21L8 18 M10 3H21 M15.5 3V20 M9 20.5H22" fill="none" stroke="#6f8a5e" stroke-width="1.15"/>
<path transform="translate(946.95 701.02)" d="M11 0V2 M1 5V2H21V5 M5 6H17 M6 8H16V11H6Z M4 13H18V23H4Z M4 18H18 M11 13V23" fill="none" stroke="#6f8a5e" stroke-width="1.15"/>
<path transform="translate(972.40 701.02)" d="M2 8H20 M11 1V21 M4 21H18" fill="none" stroke="#6f8a5e" stroke-width="1.15"/>
<text y="758.1600000000001" font-family="'Liberation Mono'" font-size="22.8" letter-spacing="0.315"><tspan x="696.00" fill="#a9b7c6">apple.setOrigin(</tspan><tspan x="920.00" fill="#6a8759">"</tspan><tspan x="984.90" fill="#6a8759">"</tspan><tspan x="998.90" fill="#a9b7c6">)</tspan><tspan x="1012.90" fill="#cc7832">;</tspan></text>
<path transform="translate(935.50 737.16)" d="M10 2H1V21H10 M3 7L9 16 M9 7L3 16 M14 1L11 9 M13 5H21L19 9 M16 8Q16 17 10 23 M16 14L22 23" fill="none" stroke="#6f8a5e" stroke-width="1.15"/>
<path transform="translate(960.95 737.16)" d="M1 2L3 4 M0 8L3 10 M0 20L4 14 M8 1V12Q8 19 5 23 M14 1V23 M20 1V23 M10 9L11 12 M16 9L17 12 M21.5 9L22 12" fill="none" stroke="#6f8a5e" stroke-width="1.15"/>
<text y="794.3" font-family="'Liberation Mono'" font-size="22.8" letter-spacing="0.315"><tspan x="696.00" fill="#a9b7c6">apple.setColor(</tspan><tspan x="906.00" fill="#6a8759">"</tspan><tspan x="970.90" fill="#6a8759">"</tspan><tspan x="984.90" fill="#a9b7c6">)</tspan><tspan x="998.90" fill="#cc7832">;</tspan></text>
<path transform="translate(921.50 773.30)" d="M5 0L1.5 8L7 8L1.5 15L8 13 M1 21L8 18 M10 3H21 M15.5 3V20 M9 20.5H22" fill="none" stroke="#6f8a5e" stroke-width="1.15"/>
<path transform="translate(946.95 773.30)" d="M9 0L3 7 M8 3H15L11 8 M4 8H19V15H4Z M11.5 8V15 M4 15V20Q4 22 7 22H20L21 19" fill="none" stroke="#6f8a5e" stroke-width="1.15"/>
<text y="830.44" font-family="'Liberation Mono'" font-size="22.8" letter-spacing="0.315"><tspan x="696.00" fill="#cc7832">return</tspan><tspan x="794.00" fill="#a9b7c6">apple</tspan><tspan x="864.00" fill="#cc7832">;</tspan></text>
<text y="866.58" font-family="'Liberation Mono'" font-size="22.8" letter-spacing="0.315"><tspan x="640.00" fill="#a9b7c6">}</tspan></text>
<text y="902.72" font-family="'Liberation Mono'" font-size="22.8" letter-spacing="0.315"><tspan x="584.00" fill="#a9b7c6">}</tspan></text>
<circle cx="516.9" cy="640.2" r="10.8" fill="#4b9c3f"/><circle cx="509.5" cy="632.4" r="5.2" fill="#313335"/><circle cx="509.5" cy="632.4" r="4.2" fill="#e07a88"/>
<circle cx="522.2" cy="644.8" r="7.5" fill="#313335"/><path d="M528.67 643.49L528.67 646.11L526.56 646.26L525.65 647.85L526.57 649.75L524.30 651.06L523.11 649.31L521.29 649.31L520.10 651.06L517.83 649.75L518.75 647.85L517.84 646.26L515.73 646.11L515.73 643.49L517.84 643.34L518.75 641.75L517.83 639.85L520.10 638.54L521.29 640.29L523.11 640.29L524.30 638.54L526.57 639.85L525.65 641.75L526.56 643.34Z" fill="#c4c8cc"/><circle cx="522.2" cy="644.8" r="2.2" fill="#1d2d36"/>
<text x="533.5" y="648" font-family="'Liberation Mono'" font-size="22.5" fill="#c0c0c0" textLength="19" lengthAdjust="spacingAndGlyphs" >@</text>
<text x="1526.6" y="873.8" font-family="'Liberation Sans'" font-size="15.7" fill="#d8d8d8" textLength="216.3" lengthAdjust="spacingAndGlyphs" >https://blog.csdn.net/csucsgoat</text>
<rect x="1009.1" y="47.3" width="235" height="60.5" fill="none" stroke="#e3131b" stroke-width="2.6"/>
<rect x="462.5" y="512.4" width="238.3" height="51" fill="none" stroke="#e3131b" stroke-width="2.2"/>
<rect x="231" y="368.2" width="215.5" height="29.8" fill="none" stroke="#f2d31b" stroke-width="2.2"/>
<path d="M470 381.2L1165 362.2" stroke="#dcc22a" stroke-width="1.4" fill="none"/>
<path d="M459 381.5L471.5 375L471.5 388.2Z" fill="#f2d31b"/>
<path d="M944.8 392.5C955 394 965 396 975.6 396C1000 396 1100 393 1185 389.3L1580 388.3C1600 390 1615 392 1626 394.5C1640 396 1655 397 1666 397.4" stroke="#f2d31b" stroke-width="3" fill="none" stroke-linecap="round"/>
<path d="M834 438.4C845 440 855 448 866.4 450L915.7 450C930 448 940 443 952.6 443.3C970 444 985 447 1000 447.8L1028 448C1033 447 1035 445 1038.7 444.8L1096.7 444.4" stroke="#2366d6" stroke-width="3" fill="none" stroke-linecap="round"/>
<path d="M954.2 464L1030 615" stroke="#2366d6" stroke-width="1.5" fill="none"/>
<path d="M1034.4 626.6L1024 612L1037 608Z" fill="#2366d6"/>
<path d="M899.6 659C920 662 950 667 969.8 667L1000 667.5C1020 667 1030 665 1043 665.3C1065 667 1080 672 1098.9 672.6L1208.5 672.6" stroke="#2366d6" stroke-width="3" fill="none" stroke-linecap="round"/>
</svg>
</body></html>
